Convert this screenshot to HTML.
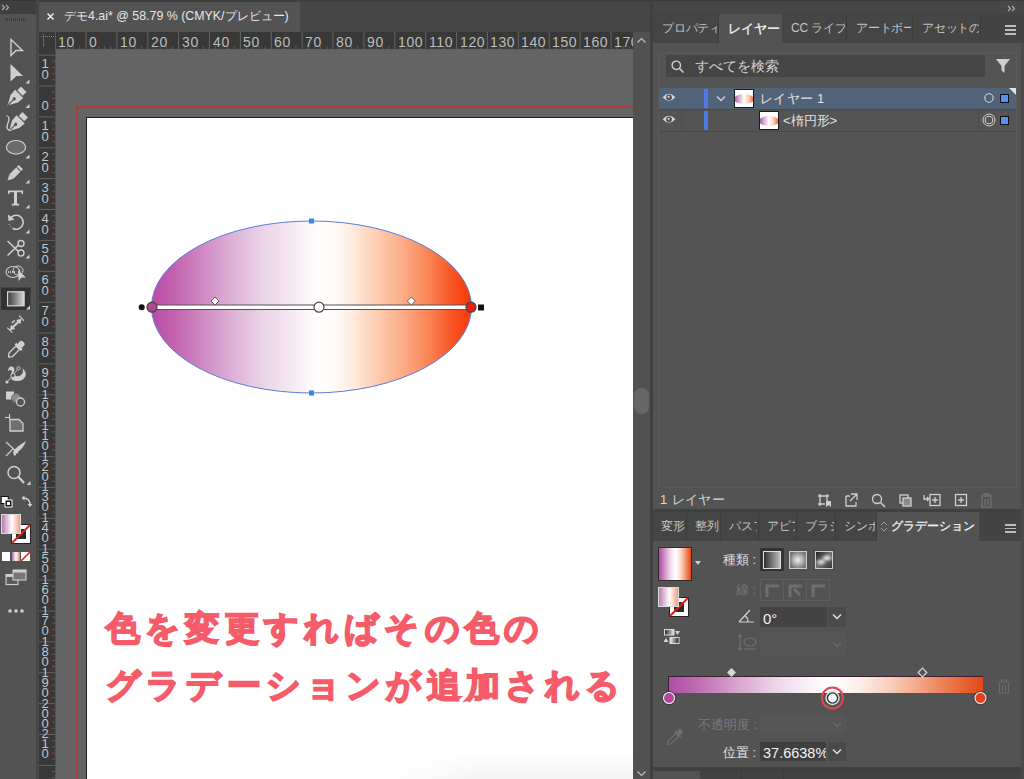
<!DOCTYPE html>
<html><head><meta charset="utf-8"><style>
html,body{margin:0;padding:0;width:1024px;height:779px;overflow:hidden;background:#535353;}
body{position:relative;font-family:"Liberation Sans",sans-serif;}
div{position:absolute;box-sizing:border-box;}
.t{white-space:nowrap;line-height:1;}
svg{position:absolute;overflow:visible;}
</style></head><body>

<div style="left:0px;top:0px;width:36px;height:779px;background:#535353;"></div>
<div style="left:0px;top:0px;width:36px;height:14px;background:#3f3f3f;"></div>
<div style="left:0px;top:0px;width:36px;height:1px;background:#363636;"></div>
<svg style="left:1px;top:4px" width="10" height="7"><path d="M1 1 L3.5 3.5 L1 6 M5 1 L7.5 3.5 L5 6" fill="none" stroke="#b0b0b0" stroke-width="1.1"/></svg>
<div style="left:5px;top:18px;width:22px;height:3px;background:repeating-linear-gradient(90deg,#3a3a3a 0 1px,transparent 1px 2px);"></div>
<div style="left:36px;top:0px;width:3px;height:779px;background:#474747;"></div>
<div style="left:39px;top:0px;width:611px;height:32px;background:#464646;"></div>
<div style="left:39px;top:0px;width:611px;height:2px;background:#3f3f3f;"></div>
<div style="left:39px;top:2px;width:261px;height:30px;background:#535353;"></div>
<svg style="left:46px;top:12px" width="9" height="9"><path d="M1.5 1.5 L7.5 7.5 M7.5 1.5 L1.5 7.5" stroke="#ececec" stroke-width="1.5"/></svg>
<div class="t" style="left:64px;top:10px;font-size:12.4px;color:#e6e6e6;letter-spacing:0px;">デモ4.ai* @ 58.79 % (CMYK/プレビュー)</div>
<div style="left:39px;top:32px;width:594px;height:17px;background:#383838;"></div>
<div style="left:39px;top:49px;width:16px;height:730px;background:#383838;"></div>
<div style="left:41px;top:36px;width:13px;height:1px;background:repeating-linear-gradient(90deg,#8a8a8a 0 1px,transparent 1px 2px);"></div>
<div style="left:43px;top:34px;width:1px;height:13px;background:#6a6a6a;"></div>
<div style="left:55px;top:32px;width:1px;height:17px;background:#555;"></div>
<svg style="left:0;top:0" width="1024" height="779"><rect x="54.6" y="32" width="1" height="17" fill="#646464"/><rect x="60.8" y="46" width="1" height="3" fill="#5a5a5a"/><rect x="67.0" y="46" width="1" height="3" fill="#5a5a5a"/><rect x="73.1" y="46" width="1" height="3" fill="#5a5a5a"/><rect x="79.3" y="46" width="1" height="3" fill="#5a5a5a"/><rect x="85.5" y="32" width="1" height="17" fill="#646464"/><rect x="91.7" y="46" width="1" height="3" fill="#5a5a5a"/><rect x="97.9" y="46" width="1" height="3" fill="#5a5a5a"/><rect x="104.0" y="46" width="1" height="3" fill="#5a5a5a"/><rect x="110.2" y="46" width="1" height="3" fill="#5a5a5a"/><rect x="116.4" y="32" width="1" height="17" fill="#646464"/><rect x="122.6" y="46" width="1" height="3" fill="#5a5a5a"/><rect x="128.7" y="46" width="1" height="3" fill="#5a5a5a"/><rect x="134.9" y="46" width="1" height="3" fill="#5a5a5a"/><rect x="141.1" y="46" width="1" height="3" fill="#5a5a5a"/><rect x="147.3" y="32" width="1" height="17" fill="#646464"/><rect x="153.4" y="46" width="1" height="3" fill="#5a5a5a"/><rect x="159.6" y="46" width="1" height="3" fill="#5a5a5a"/><rect x="165.8" y="46" width="1" height="3" fill="#5a5a5a"/><rect x="172.0" y="46" width="1" height="3" fill="#5a5a5a"/><rect x="178.1" y="32" width="1" height="17" fill="#646464"/><rect x="184.3" y="46" width="1" height="3" fill="#5a5a5a"/><rect x="190.5" y="46" width="1" height="3" fill="#5a5a5a"/><rect x="196.7" y="46" width="1" height="3" fill="#5a5a5a"/><rect x="202.8" y="46" width="1" height="3" fill="#5a5a5a"/><rect x="209.0" y="32" width="1" height="17" fill="#646464"/><rect x="215.2" y="46" width="1" height="3" fill="#5a5a5a"/><rect x="221.4" y="46" width="1" height="3" fill="#5a5a5a"/><rect x="227.5" y="46" width="1" height="3" fill="#5a5a5a"/><rect x="233.7" y="46" width="1" height="3" fill="#5a5a5a"/><rect x="239.9" y="32" width="1" height="17" fill="#646464"/><rect x="246.1" y="46" width="1" height="3" fill="#5a5a5a"/><rect x="252.3" y="46" width="1" height="3" fill="#5a5a5a"/><rect x="258.4" y="46" width="1" height="3" fill="#5a5a5a"/><rect x="264.6" y="46" width="1" height="3" fill="#5a5a5a"/><rect x="270.8" y="32" width="1" height="17" fill="#646464"/><rect x="277.0" y="46" width="1" height="3" fill="#5a5a5a"/><rect x="283.1" y="46" width="1" height="3" fill="#5a5a5a"/><rect x="289.3" y="46" width="1" height="3" fill="#5a5a5a"/><rect x="295.5" y="46" width="1" height="3" fill="#5a5a5a"/><rect x="301.7" y="32" width="1" height="17" fill="#646464"/><rect x="307.8" y="46" width="1" height="3" fill="#5a5a5a"/><rect x="314.0" y="46" width="1" height="3" fill="#5a5a5a"/><rect x="320.2" y="46" width="1" height="3" fill="#5a5a5a"/><rect x="326.4" y="46" width="1" height="3" fill="#5a5a5a"/><rect x="332.5" y="32" width="1" height="17" fill="#646464"/><rect x="338.7" y="46" width="1" height="3" fill="#5a5a5a"/><rect x="344.9" y="46" width="1" height="3" fill="#5a5a5a"/><rect x="351.1" y="46" width="1" height="3" fill="#5a5a5a"/><rect x="357.2" y="46" width="1" height="3" fill="#5a5a5a"/><rect x="363.4" y="32" width="1" height="17" fill="#646464"/><rect x="369.6" y="46" width="1" height="3" fill="#5a5a5a"/><rect x="375.8" y="46" width="1" height="3" fill="#5a5a5a"/><rect x="381.9" y="46" width="1" height="3" fill="#5a5a5a"/><rect x="388.1" y="46" width="1" height="3" fill="#5a5a5a"/><rect x="394.3" y="32" width="1" height="17" fill="#646464"/><rect x="400.5" y="46" width="1" height="3" fill="#5a5a5a"/><rect x="406.7" y="46" width="1" height="3" fill="#5a5a5a"/><rect x="412.8" y="46" width="1" height="3" fill="#5a5a5a"/><rect x="419.0" y="46" width="1" height="3" fill="#5a5a5a"/><rect x="425.2" y="32" width="1" height="17" fill="#646464"/><rect x="431.4" y="46" width="1" height="3" fill="#5a5a5a"/><rect x="437.5" y="46" width="1" height="3" fill="#5a5a5a"/><rect x="443.7" y="46" width="1" height="3" fill="#5a5a5a"/><rect x="449.9" y="46" width="1" height="3" fill="#5a5a5a"/><rect x="456.1" y="32" width="1" height="17" fill="#646464"/><rect x="462.2" y="46" width="1" height="3" fill="#5a5a5a"/><rect x="468.4" y="46" width="1" height="3" fill="#5a5a5a"/><rect x="474.6" y="46" width="1" height="3" fill="#5a5a5a"/><rect x="480.8" y="46" width="1" height="3" fill="#5a5a5a"/><rect x="486.9" y="32" width="1" height="17" fill="#646464"/><rect x="493.1" y="46" width="1" height="3" fill="#5a5a5a"/><rect x="499.3" y="46" width="1" height="3" fill="#5a5a5a"/><rect x="505.5" y="46" width="1" height="3" fill="#5a5a5a"/><rect x="511.6" y="46" width="1" height="3" fill="#5a5a5a"/><rect x="517.8" y="32" width="1" height="17" fill="#646464"/><rect x="524.0" y="46" width="1" height="3" fill="#5a5a5a"/><rect x="530.2" y="46" width="1" height="3" fill="#5a5a5a"/><rect x="536.3" y="46" width="1" height="3" fill="#5a5a5a"/><rect x="542.5" y="46" width="1" height="3" fill="#5a5a5a"/><rect x="548.7" y="32" width="1" height="17" fill="#646464"/><rect x="554.9" y="46" width="1" height="3" fill="#5a5a5a"/><rect x="561.1" y="46" width="1" height="3" fill="#5a5a5a"/><rect x="567.2" y="46" width="1" height="3" fill="#5a5a5a"/><rect x="573.4" y="46" width="1" height="3" fill="#5a5a5a"/><rect x="579.6" y="32" width="1" height="17" fill="#646464"/><rect x="585.8" y="46" width="1" height="3" fill="#5a5a5a"/><rect x="591.9" y="46" width="1" height="3" fill="#5a5a5a"/><rect x="598.1" y="46" width="1" height="3" fill="#5a5a5a"/><rect x="604.3" y="46" width="1" height="3" fill="#5a5a5a"/><rect x="610.5" y="32" width="1" height="17" fill="#646464"/><rect x="616.6" y="46" width="1" height="3" fill="#5a5a5a"/><rect x="622.8" y="46" width="1" height="3" fill="#5a5a5a"/><rect x="629.0" y="46" width="1" height="3" fill="#5a5a5a"/></svg>
<div class="t" style="left:58px;top:35px;font-size:14px;color:#bcbcbc;letter-spacing:0.6px;">10</div>
<div class="t" style="left:89px;top:35px;font-size:14px;color:#bcbcbc;letter-spacing:0.6px;">0</div>
<div class="t" style="left:120px;top:35px;font-size:14px;color:#bcbcbc;letter-spacing:0.6px;">10</div>
<div class="t" style="left:151px;top:35px;font-size:14px;color:#bcbcbc;letter-spacing:0.6px;">20</div>
<div class="t" style="left:182px;top:35px;font-size:14px;color:#bcbcbc;letter-spacing:0.6px;">30</div>
<div class="t" style="left:213px;top:35px;font-size:14px;color:#bcbcbc;letter-spacing:0.6px;">40</div>
<div class="t" style="left:243px;top:35px;font-size:14px;color:#bcbcbc;letter-spacing:0.6px;">50</div>
<div class="t" style="left:274px;top:35px;font-size:14px;color:#bcbcbc;letter-spacing:0.6px;">60</div>
<div class="t" style="left:305px;top:35px;font-size:14px;color:#bcbcbc;letter-spacing:0.6px;">70</div>
<div class="t" style="left:336px;top:35px;font-size:14px;color:#bcbcbc;letter-spacing:0.6px;">80</div>
<div class="t" style="left:367px;top:35px;font-size:14px;color:#bcbcbc;letter-spacing:0.6px;">90</div>
<div class="t" style="left:398px;top:35px;font-size:14px;color:#bcbcbc;letter-spacing:0.6px;">100</div>
<div class="t" style="left:429px;top:35px;font-size:14px;color:#bcbcbc;letter-spacing:0.6px;">110</div>
<div class="t" style="left:460px;top:35px;font-size:14px;color:#bcbcbc;letter-spacing:0.6px;">120</div>
<div class="t" style="left:490px;top:35px;font-size:14px;color:#bcbcbc;letter-spacing:0.6px;">130</div>
<div class="t" style="left:521px;top:35px;font-size:14px;color:#bcbcbc;letter-spacing:0.6px;">140</div>
<div class="t" style="left:552px;top:35px;font-size:14px;color:#bcbcbc;letter-spacing:0.6px;">150</div>
<div class="t" style="left:583px;top:35px;font-size:14px;color:#bcbcbc;letter-spacing:0.6px;">160</div>
<div class="t" style="left:614px;top:35px;font-size:14px;color:#bcbcbc;letter-spacing:0.6px;">170</div>
<svg style="left:0;top:0" width="1024" height="779"><rect x="39" y="54.6" width="16" height="1" fill="#646464"/><rect x="52" y="60.8" width="3" height="1" fill="#5a5a5a"/><rect x="52" y="67.0" width="3" height="1" fill="#5a5a5a"/><rect x="52" y="73.1" width="3" height="1" fill="#5a5a5a"/><rect x="52" y="79.3" width="3" height="1" fill="#5a5a5a"/><rect x="39" y="85.5" width="16" height="1" fill="#646464"/><rect x="52" y="91.7" width="3" height="1" fill="#5a5a5a"/><rect x="52" y="97.9" width="3" height="1" fill="#5a5a5a"/><rect x="52" y="104.0" width="3" height="1" fill="#5a5a5a"/><rect x="52" y="110.2" width="3" height="1" fill="#5a5a5a"/><rect x="39" y="116.4" width="16" height="1" fill="#646464"/><rect x="52" y="122.6" width="3" height="1" fill="#5a5a5a"/><rect x="52" y="128.7" width="3" height="1" fill="#5a5a5a"/><rect x="52" y="134.9" width="3" height="1" fill="#5a5a5a"/><rect x="52" y="141.1" width="3" height="1" fill="#5a5a5a"/><rect x="39" y="147.3" width="16" height="1" fill="#646464"/><rect x="52" y="153.4" width="3" height="1" fill="#5a5a5a"/><rect x="52" y="159.6" width="3" height="1" fill="#5a5a5a"/><rect x="52" y="165.8" width="3" height="1" fill="#5a5a5a"/><rect x="52" y="172.0" width="3" height="1" fill="#5a5a5a"/><rect x="39" y="178.1" width="16" height="1" fill="#646464"/><rect x="52" y="184.3" width="3" height="1" fill="#5a5a5a"/><rect x="52" y="190.5" width="3" height="1" fill="#5a5a5a"/><rect x="52" y="196.7" width="3" height="1" fill="#5a5a5a"/><rect x="52" y="202.8" width="3" height="1" fill="#5a5a5a"/><rect x="39" y="209.0" width="16" height="1" fill="#646464"/><rect x="52" y="215.2" width="3" height="1" fill="#5a5a5a"/><rect x="52" y="221.4" width="3" height="1" fill="#5a5a5a"/><rect x="52" y="227.5" width="3" height="1" fill="#5a5a5a"/><rect x="52" y="233.7" width="3" height="1" fill="#5a5a5a"/><rect x="39" y="239.9" width="16" height="1" fill="#646464"/><rect x="52" y="246.1" width="3" height="1" fill="#5a5a5a"/><rect x="52" y="252.3" width="3" height="1" fill="#5a5a5a"/><rect x="52" y="258.4" width="3" height="1" fill="#5a5a5a"/><rect x="52" y="264.6" width="3" height="1" fill="#5a5a5a"/><rect x="39" y="270.8" width="16" height="1" fill="#646464"/><rect x="52" y="277.0" width="3" height="1" fill="#5a5a5a"/><rect x="52" y="283.1" width="3" height="1" fill="#5a5a5a"/><rect x="52" y="289.3" width="3" height="1" fill="#5a5a5a"/><rect x="52" y="295.5" width="3" height="1" fill="#5a5a5a"/><rect x="39" y="301.7" width="16" height="1" fill="#646464"/><rect x="52" y="307.8" width="3" height="1" fill="#5a5a5a"/><rect x="52" y="314.0" width="3" height="1" fill="#5a5a5a"/><rect x="52" y="320.2" width="3" height="1" fill="#5a5a5a"/><rect x="52" y="326.4" width="3" height="1" fill="#5a5a5a"/><rect x="39" y="332.5" width="16" height="1" fill="#646464"/><rect x="52" y="338.7" width="3" height="1" fill="#5a5a5a"/><rect x="52" y="344.9" width="3" height="1" fill="#5a5a5a"/><rect x="52" y="351.1" width="3" height="1" fill="#5a5a5a"/><rect x="52" y="357.2" width="3" height="1" fill="#5a5a5a"/><rect x="39" y="363.4" width="16" height="1" fill="#646464"/><rect x="52" y="369.6" width="3" height="1" fill="#5a5a5a"/><rect x="52" y="375.8" width="3" height="1" fill="#5a5a5a"/><rect x="52" y="381.9" width="3" height="1" fill="#5a5a5a"/><rect x="52" y="388.1" width="3" height="1" fill="#5a5a5a"/><rect x="39" y="394.3" width="16" height="1" fill="#646464"/><rect x="52" y="400.5" width="3" height="1" fill="#5a5a5a"/><rect x="52" y="406.7" width="3" height="1" fill="#5a5a5a"/><rect x="52" y="412.8" width="3" height="1" fill="#5a5a5a"/><rect x="52" y="419.0" width="3" height="1" fill="#5a5a5a"/><rect x="39" y="425.2" width="16" height="1" fill="#646464"/><rect x="52" y="431.4" width="3" height="1" fill="#5a5a5a"/><rect x="52" y="437.5" width="3" height="1" fill="#5a5a5a"/><rect x="52" y="443.7" width="3" height="1" fill="#5a5a5a"/><rect x="52" y="449.9" width="3" height="1" fill="#5a5a5a"/><rect x="39" y="456.1" width="16" height="1" fill="#646464"/><rect x="52" y="462.2" width="3" height="1" fill="#5a5a5a"/><rect x="52" y="468.4" width="3" height="1" fill="#5a5a5a"/><rect x="52" y="474.6" width="3" height="1" fill="#5a5a5a"/><rect x="52" y="480.8" width="3" height="1" fill="#5a5a5a"/><rect x="39" y="486.9" width="16" height="1" fill="#646464"/><rect x="52" y="493.1" width="3" height="1" fill="#5a5a5a"/><rect x="52" y="499.3" width="3" height="1" fill="#5a5a5a"/><rect x="52" y="505.5" width="3" height="1" fill="#5a5a5a"/><rect x="52" y="511.6" width="3" height="1" fill="#5a5a5a"/><rect x="39" y="517.8" width="16" height="1" fill="#646464"/><rect x="52" y="524.0" width="3" height="1" fill="#5a5a5a"/><rect x="52" y="530.2" width="3" height="1" fill="#5a5a5a"/><rect x="52" y="536.3" width="3" height="1" fill="#5a5a5a"/><rect x="52" y="542.5" width="3" height="1" fill="#5a5a5a"/><rect x="39" y="548.7" width="16" height="1" fill="#646464"/><rect x="52" y="554.9" width="3" height="1" fill="#5a5a5a"/><rect x="52" y="561.1" width="3" height="1" fill="#5a5a5a"/><rect x="52" y="567.2" width="3" height="1" fill="#5a5a5a"/><rect x="52" y="573.4" width="3" height="1" fill="#5a5a5a"/><rect x="39" y="579.6" width="16" height="1" fill="#646464"/><rect x="52" y="585.8" width="3" height="1" fill="#5a5a5a"/><rect x="52" y="591.9" width="3" height="1" fill="#5a5a5a"/><rect x="52" y="598.1" width="3" height="1" fill="#5a5a5a"/><rect x="52" y="604.3" width="3" height="1" fill="#5a5a5a"/><rect x="39" y="610.5" width="16" height="1" fill="#646464"/><rect x="52" y="616.6" width="3" height="1" fill="#5a5a5a"/><rect x="52" y="622.8" width="3" height="1" fill="#5a5a5a"/><rect x="52" y="629.0" width="3" height="1" fill="#5a5a5a"/><rect x="52" y="635.2" width="3" height="1" fill="#5a5a5a"/><rect x="39" y="641.3" width="16" height="1" fill="#646464"/><rect x="52" y="647.5" width="3" height="1" fill="#5a5a5a"/><rect x="52" y="653.7" width="3" height="1" fill="#5a5a5a"/><rect x="52" y="659.9" width="3" height="1" fill="#5a5a5a"/><rect x="52" y="666.0" width="3" height="1" fill="#5a5a5a"/><rect x="39" y="672.2" width="16" height="1" fill="#646464"/><rect x="52" y="678.4" width="3" height="1" fill="#5a5a5a"/><rect x="52" y="684.6" width="3" height="1" fill="#5a5a5a"/><rect x="52" y="690.7" width="3" height="1" fill="#5a5a5a"/><rect x="52" y="696.9" width="3" height="1" fill="#5a5a5a"/><rect x="39" y="703.1" width="16" height="1" fill="#646464"/><rect x="52" y="709.3" width="3" height="1" fill="#5a5a5a"/><rect x="52" y="715.5" width="3" height="1" fill="#5a5a5a"/><rect x="52" y="721.6" width="3" height="1" fill="#5a5a5a"/><rect x="52" y="727.8" width="3" height="1" fill="#5a5a5a"/><rect x="39" y="734.0" width="16" height="1" fill="#646464"/><rect x="52" y="740.2" width="3" height="1" fill="#5a5a5a"/><rect x="52" y="746.3" width="3" height="1" fill="#5a5a5a"/><rect x="52" y="752.5" width="3" height="1" fill="#5a5a5a"/><rect x="52" y="758.7" width="3" height="1" fill="#5a5a5a"/><rect x="39" y="764.9" width="16" height="1" fill="#646464"/><rect x="52" y="771.0" width="3" height="1" fill="#5a5a5a"/><rect x="52" y="777.2" width="3" height="1" fill="#5a5a5a"/><rect x="52" y="783.4" width="3" height="1" fill="#5a5a5a"/><rect x="52" y="789.6" width="3" height="1" fill="#5a5a5a"/></svg>
<div class="t" style="left:39px;top:58px;width:12px;text-align:center;font-size:13px;line-height:11px;color:#c4c4c4;">1<br>0</div>
<div class="t" style="left:39px;top:100px;width:12px;text-align:center;font-size:13px;line-height:11px;color:#c4c4c4;">0</div>
<div class="t" style="left:39px;top:120px;width:12px;text-align:center;font-size:13px;line-height:11px;color:#c4c4c4;">1<br>0</div>
<div class="t" style="left:39px;top:151px;width:12px;text-align:center;font-size:13px;line-height:11px;color:#c4c4c4;">2<br>0</div>
<div class="t" style="left:39px;top:182px;width:12px;text-align:center;font-size:13px;line-height:11px;color:#c4c4c4;">3<br>0</div>
<div class="t" style="left:39px;top:213px;width:12px;text-align:center;font-size:13px;line-height:11px;color:#c4c4c4;">4<br>0</div>
<div class="t" style="left:39px;top:243px;width:12px;text-align:center;font-size:13px;line-height:11px;color:#c4c4c4;">5<br>0</div>
<div class="t" style="left:39px;top:274px;width:12px;text-align:center;font-size:13px;line-height:11px;color:#c4c4c4;">6<br>0</div>
<div class="t" style="left:39px;top:305px;width:12px;text-align:center;font-size:13px;line-height:11px;color:#c4c4c4;">7<br>0</div>
<div class="t" style="left:39px;top:336px;width:12px;text-align:center;font-size:13px;line-height:11px;color:#c4c4c4;">8<br>0</div>
<div class="t" style="left:39px;top:367px;width:12px;text-align:center;font-size:13px;line-height:11px;color:#c4c4c4;">9<br>0</div>
<div class="t" style="left:39px;top:390px;width:12px;text-align:center;font-size:13px;line-height:10.2px;color:#c4c4c4;">1<br>0<br>0</div>
<div class="t" style="left:39px;top:421px;width:12px;text-align:center;font-size:13px;line-height:10.2px;color:#c4c4c4;">1<br>1<br>0</div>
<div class="t" style="left:39px;top:452px;width:12px;text-align:center;font-size:13px;line-height:10.2px;color:#c4c4c4;">1<br>2<br>0</div>
<div class="t" style="left:39px;top:482px;width:12px;text-align:center;font-size:13px;line-height:10.2px;color:#c4c4c4;">1<br>3<br>0</div>
<div class="t" style="left:39px;top:513px;width:12px;text-align:center;font-size:13px;line-height:10.2px;color:#c4c4c4;">1<br>4<br>0</div>
<div class="t" style="left:39px;top:544px;width:12px;text-align:center;font-size:13px;line-height:10.2px;color:#c4c4c4;">1<br>5<br>0</div>
<div class="t" style="left:39px;top:575px;width:12px;text-align:center;font-size:13px;line-height:10.2px;color:#c4c4c4;">1<br>6<br>0</div>
<div class="t" style="left:39px;top:606px;width:12px;text-align:center;font-size:13px;line-height:10.2px;color:#c4c4c4;">1<br>7<br>0</div>
<div class="t" style="left:39px;top:637px;width:12px;text-align:center;font-size:13px;line-height:10.2px;color:#c4c4c4;">1<br>8<br>0</div>
<div class="t" style="left:39px;top:668px;width:12px;text-align:center;font-size:13px;line-height:10.2px;color:#c4c4c4;">1<br>9<br>0</div>
<div class="t" style="left:39px;top:699px;width:12px;text-align:center;font-size:13px;line-height:10.2px;color:#c4c4c4;">2<br>0<br>0</div>
<div class="t" style="left:39px;top:729px;width:12px;text-align:center;font-size:13px;line-height:10.2px;color:#c4c4c4;">2<br>1<br>0</div>
<div style="left:39px;top:32px;width:16px;height:17px;background:#383838;"></div>
<div style="left:41px;top:36px;width:13px;height:1px;background:repeating-linear-gradient(90deg,#8a8a8a 0 1px,transparent 1px 2px);"></div>
<div style="left:43px;top:34px;width:1px;height:13px;background:#6a6a6a;"></div>
<div style="left:56px;top:49px;width:577px;height:730px;background:#646464;"></div>
<div style="left:76px;top:106px;width:557px;height:2px;background:#ad3a3c;"></div>
<div style="left:76px;top:106px;width:2px;height:673px;background:#ad3a3c;"></div>
<div style="left:86px;top:117px;width:547px;height:662px;background:#222;"></div>
<div style="left:87px;top:118px;width:546px;height:661px;background:#ffffff;"></div>
<div style="left:633px;top:32px;width:17px;height:747px;background:#515151;"></div>
<div style="left:634px;top:388px;width:15px;height:26px;background:#666;border-radius:7px;"></div>
<div style="left:650px;top:0px;width:3px;height:779px;background:#404040;"></div>
<div style="left:653px;top:0px;width:371px;height:779px;background:#535353;"></div>
<div style="left:653px;top:0px;width:371px;height:13px;background:#474747;"></div>
<div style="left:653px;top:0px;width:371px;height:1px;background:#3a3a3a;"></div>
<svg style="left:1007px;top:5px" width="10" height="7"><path d="M1 1 L3.5 3.5 L1 6 M5 1 L7.5 3.5 L5 6" fill="none" stroke="#b0b0b0" stroke-width="1.1"/></svg>
<div style="left:653px;top:13px;width:371px;height:30px;background:#434343;"></div>
<div style="left:653px;top:14px;width:66px;height:29px;background:#454545;border-right:1px solid #3c3c3c;"></div>
<div class="t" style="left:653px;top:22px;width:64px;font-size:12px;letter-spacing:-0.2px;color:#c4c4c4;overflow:hidden;padding-left:9px;">プロパティ</div>
<div style="left:719px;top:14px;width:63px;height:29px;background:#535353;"></div>
<div class="t" style="left:719px;top:22px;width:63px;font-size:13px;color:#f2f2f2;overflow:hidden;padding-left:9px;-webkit-text-stroke:0.3px #f2f2f2;">レイヤー</div>
<div style="left:782px;top:14px;width:65px;height:29px;background:#454545;border-right:1px solid #3c3c3c;"></div>
<div class="t" style="left:782px;top:22px;width:63px;font-size:12px;letter-spacing:-0.2px;color:#c4c4c4;overflow:hidden;padding-left:9px;">CC ライブ</div>
<div style="left:847px;top:14px;width:66px;height:29px;background:#454545;border-right:1px solid #3c3c3c;"></div>
<div class="t" style="left:847px;top:22px;width:64px;font-size:12px;letter-spacing:-0.2px;color:#c4c4c4;overflow:hidden;padding-left:9px;">アートボー</div>
<div style="left:913px;top:14px;width:68px;height:29px;background:#454545;border-right:1px solid #3c3c3c;"></div>
<div class="t" style="left:913px;top:22px;width:66px;font-size:12px;letter-spacing:-0.2px;color:#c4c4c4;overflow:hidden;padding-left:9px;">アセットの</div>
<div style="left:1005px;top:25px;width:11px;height:1.5px;background:#bdbdbd;"></div>
<div style="left:1005px;top:29px;width:11px;height:1.5px;background:#bdbdbd;"></div>
<div style="left:1005px;top:33px;width:11px;height:1.5px;background:#bdbdbd;"></div>
<div style="left:658px;top:52px;width:359px;height:436px;background:#545454;border:1px solid #5a5a5a;"></div>
<div style="left:666px;top:55px;width:319px;height:22px;background:#454545;"></div>
<svg style="left:670px;top:59px" width="16" height="16"><circle cx="6.3" cy="6.3" r="4.2" fill="none" stroke="#d0d0d0" stroke-width="1.4"/><line x1="9.5" y1="9.5" x2="13" y2="13" stroke="#d0d0d0" stroke-width="1.7" stroke-linecap="round"/></svg>
<div class="t" style="left:695px;top:59px;font-size:14px;color:#d2d2d2;">すべてを検索</div>
<svg style="left:995px;top:58px" width="16" height="16"><path d="M1 1 H15 L9.5 8 V15 L6.5 12.5 V8 Z" fill="#cfcfcf"/></svg>
<div style="left:659px;top:88px;width:357px;height:21px;background:#506379;"></div>
<svg style="left:662px;top:92px" width="14" height="11"><path d="M0.6 5.3 Q7 -1.6 13.4 5.3 Q7 12.2 0.6 5.3Z" fill="#d6d6d6"/><circle cx="7" cy="5.3" r="2.9" fill="#505050"/><circle cx="6.6" cy="4.8" r="1.1" fill="#d6d6d6"/></svg>
<div style="left:704px;top:89px;width:4px;height:19px;background:#5078e6;"></div>
<svg style="left:716px;top:95px" width="10" height="8"><path d="M1 1.5 L5 5.5 L9 1.5" fill="none" stroke="#d0d0d0" stroke-width="1.5"/></svg>
<div style="left:734px;top:89px;width:20px;height:19px;background:#fff;border:1px solid #1a1a1a;overflow:hidden;"><div style="left:-1px;top:4px;width:20px;height:10px;border-radius:50%;background:linear-gradient(90deg,#a04a98,#d8b0d4 25%,#fff 50%,#f8c8b0 75%,#e85a28);"></div></div>
<div class="t" style="left:760px;top:92px;font-size:13px;color:#e0e0e0;letter-spacing:0.3px;">レイヤー 1</div>
<svg style="left:984px;top:93px" width="10" height="10"><circle cx="5" cy="5" r="4.2" fill="none" stroke="#d8d8d8" stroke-width="1.1"/></svg>
<div style="left:1000px;top:94px;width:9px;height:9px;background:#5d8ef2;border:1px solid #111;"></div>
<svg style="left:1009px;top:88px" width="7" height="7"><path d="M0 0 H7 V7 Z" fill="#e0e0e0"/></svg>
<div style="left:659px;top:109px;width:357px;height:1px;background:#4a4a4a;"></div>
<div style="left:659px;top:131px;width:357px;height:1px;background:#4a4a4a;"></div>
<svg style="left:662px;top:114px" width="14" height="11"><path d="M0.6 5.3 Q7 -1.6 13.4 5.3 Q7 12.2 0.6 5.3Z" fill="#d6d6d6"/><circle cx="7" cy="5.3" r="2.9" fill="#505050"/><circle cx="6.6" cy="4.8" r="1.1" fill="#d6d6d6"/></svg>
<div style="left:681px;top:110px;width:1px;height:21px;background:#4c4c4c;"></div>
<div style="left:704px;top:111px;width:4px;height:19px;background:#5078e6;"></div>
<div style="left:759px;top:111px;width:20px;height:19px;background:#fff;border:1px solid #1a1a1a;overflow:hidden;"><div style="left:-1px;top:4px;width:20px;height:10px;border-radius:50%;background:linear-gradient(90deg,#a04a98,#d8b0d4 25%,#fff 50%,#f8c8b0 75%,#e85a28);"></div></div>
<div class="t" style="left:783px;top:114px;font-size:13px;color:#e0e0e0;">&lt;楕円形&gt;</div>
<div style="left:978px;top:110px;width:1px;height:21px;background:#4c4c4c;"></div>
<svg style="left:982px;top:113px" width="14" height="14"><circle cx="7" cy="7" r="6" fill="none" stroke="#d0d0d0" stroke-width="1"/><circle cx="7" cy="7" r="3.8" fill="none" stroke="#d0d0d0" stroke-width="1.1"/></svg>
<div style="left:1000px;top:116px;width:9px;height:9px;background:#5d8ef2;border:1px solid #111;"></div>
<div class="t" style="left:660px;top:493px;font-size:13px;color:#d6d6d6;letter-spacing:0.4px;">1 レイヤー</div>
<svg style="left:816px;top:493px" width="180" height="15" fill="none" stroke="#d0d0d0" stroke-width="1.3"><path d="M2 3 H13 M4 1 V13 M2 11 H9 M11 1 V8"/><path d="M10 8 H15 V14 L12.5 12 L10 14 Z" fill="#d0d0d0" stroke="none"/><path d="M30 3 H34 M30 3 V13 H40 V9 M35 1 H41 V7 M41 1 L34 8"/><circle cx="61" cy="6" r="4.5"/><path d="M64.5 9.5 L69 14" stroke-width="1.6"/><rect x="84" y="2" width="8" height="8"/><rect x="87" y="5" width="8" height="8" fill="#8a8a8a"/><path d="M108 2 V6 H113 M111 4 L113 6 L111 8"/><rect x="114" y="1.5" width="10" height="11"/><path d="M119 4 V10 M116 7 H122"/><rect x="139.5" y="1.5" width="11" height="11"/><path d="M145 4 V10 M142 7 H148"/><path d="M165 3 H176 M168 3 V1 H173 V3 M166 4 V14 H175 V4 M169 6 V12 M172 6 V12" stroke="#707070"/></svg>
<div style="left:653px;top:509px;width:371px;height:3px;background:#404040;"></div>
<div style="left:653px;top:512px;width:371px;height:29px;background:#434343;"></div>
<div style="left:653px;top:512px;width:34px;height:29px;background:#454545;border-right:1px solid #3c3c3c;"></div>
<div class="t" style="left:653px;top:520px;width:32px;font-size:12px;color:#c4c4c4;overflow:hidden;padding-left:8px;">変形</div>
<div style="left:687px;top:512px;width:34px;height:29px;background:#454545;border-right:1px solid #3c3c3c;"></div>
<div class="t" style="left:687px;top:520px;width:32px;font-size:12px;color:#c4c4c4;overflow:hidden;padding-left:8px;">整列</div>
<div style="left:721px;top:512px;width:38px;height:29px;background:#454545;border-right:1px solid #3c3c3c;"></div>
<div class="t" style="left:721px;top:520px;width:36px;font-size:12px;color:#c4c4c4;overflow:hidden;padding-left:8px;">パスフ</div>
<div style="left:759px;top:512px;width:38px;height:29px;background:#454545;border-right:1px solid #3c3c3c;"></div>
<div class="t" style="left:759px;top:520px;width:36px;font-size:12px;color:#c4c4c4;overflow:hidden;padding-left:8px;">アピア</div>
<div style="left:797px;top:512px;width:39px;height:29px;background:#454545;border-right:1px solid #3c3c3c;"></div>
<div class="t" style="left:797px;top:520px;width:37px;font-size:12px;color:#c4c4c4;overflow:hidden;padding-left:8px;">ブラシ</div>
<div style="left:836px;top:512px;width:41px;height:29px;background:#454545;border-right:1px solid #3c3c3c;"></div>
<div class="t" style="left:836px;top:520px;width:39px;font-size:12px;color:#c4c4c4;overflow:hidden;padding-left:8px;">シンボル</div>
<div style="left:877px;top:512px;width:102px;height:29px;background:#535353;"></div>
<svg style="left:880px;top:520px" width="8" height="13"><path d="M1 5 L4 2 L7 5 M1 8 L4 11 L7 8" fill="none" stroke="#a0a0a0" stroke-width="1"/></svg>
<div class="t" style="left:891px;top:520px;font-size:12px;color:#f2f2f2;-webkit-text-stroke:0.3px #f2f2f2;">グラデーション</div>
<div style="left:1005px;top:524.0px;width:11px;height:1.5px;background:#bdbdbd;"></div>
<div style="left:1005px;top:527.6px;width:11px;height:1.5px;background:#bdbdbd;"></div>
<div style="left:1005px;top:531.2px;width:11px;height:1.5px;background:#bdbdbd;"></div>
<div style="left:653px;top:541px;width:371px;height:226px;background:#535353;"></div>
<div style="left:658px;top:547px;width:34px;height:34px;border:1px solid #2a2a2a;background:linear-gradient(90deg,#b04ea6 0%,#c070b4 10%,#d8a6d0 22%,#eed8ea 35%,#fbf5fa 46%,#ffffff 52%,#fdf0ea 60%,#f9d0bc 70%,#f3a484 80%,#ea7448 90%,#e24818 100%);"></div>
<svg style="left:695px;top:561px" width="6" height="5"><path d="M0 0 H6 L3 4 Z" fill="#cfcfcf"/></svg>
<div style="left:669px;top:597px;width:20px;height:20px;background:#fff;border:1px solid #222;"><div style="left:4px;top:4px;width:10px;height:10px;background:#2a2a2a;"></div></div>
<svg style="left:669px;top:597px" width="20" height="20"><line x1="1" y1="19" x2="19" y2="1" stroke="#e0201a" stroke-width="2"/></svg>
<div style="left:658px;top:587px;width:21px;height:20px;border:1px solid #dcdcdc;background:linear-gradient(90deg,#c07ab5,#fff 55%,#f0a080);"></div>
<svg style="left:660px;top:625px" width="24" height="22"><defs><linearGradient id="sw1" x1="0" x2="1"><stop offset="0" stop-color="#222"/><stop offset="1" stop-color="#eee"/></linearGradient><linearGradient id="sw2" x1="1" x2="0"><stop offset="0" stop-color="#222"/><stop offset="1" stop-color="#eee"/></linearGradient></defs><rect x="4.5" y="4.5" width="9.5" height="5.5" fill="url(#sw1)" stroke="#dcdcdc" stroke-width="1"/><path d="M15 6 H20 L17.5 10Z" fill="#d6d6d6"/><path d="M3.5 17 H8.5 L6 13Z" fill="#d6d6d6"/><rect x="10" y="12.5" width="9" height="6" fill="url(#sw2)" stroke="#dcdcdc" stroke-width="1"/></svg>
<div class="t" style="left:723px;top:553px;font-size:13px;color:#e0e0e0;">種類 :</div>
<div style="left:760px;top:548px;width:24px;height:23px;background:#333333;"></div>
<div style="left:763px;top:551px;width:18px;height:18px;border:1.5px solid #dedede;background:linear-gradient(90deg,#2e2e2e,#bdbdbd);"></div>
<div style="left:787px;top:548px;width:22px;height:23px;background:#4e4e4e;"></div>
<div style="left:789px;top:551px;width:18px;height:18px;border:1.5px solid #cfcfcf;background:radial-gradient(circle,#f0f0f0 0,#777 80%);"></div>
<div style="left:813px;top:548px;width:22px;height:23px;background:#4e4e4e;"></div>
<div style="left:815px;top:551px;width:18px;height:18px;border:1.5px solid #cfcfcf;background:radial-gradient(ellipse 6px 4px at 11px 6px,#eee,transparent),radial-gradient(ellipse 6px 4px at 5px 10px,#ddd,transparent),linear-gradient(135deg,#222,#777 50%,#333);"></div>
<div class="t" style="left:736px;top:583px;font-size:13px;color:#777;">線 :</div>
<div style="left:760px;top:579px;width:70px;height:22px;border:1px solid #5e5e5e;"></div>
<div style="left:783px;top:580px;width:1px;height:20px;background:#5e5e5e;"></div>
<div style="left:806px;top:580px;width:1px;height:20px;background:#5e5e5e;"></div>
<div style="left:829px;top:580px;width:1px;height:20px;background:#5e5e5e;"></div>
<svg style="left:764px;top:583px" width="66" height="15" fill="none" stroke="#6e6e6e" stroke-width="3"><path d="M3 14 V3 H15"/><path d="M26 14 V3 H38 M30 6 L36 12" /><path d="M49 14 V3 H61"/></svg>
<svg style="left:738px;top:609px" width="17" height="14"><path d="M1 13 H16 M1 13 L12 1 M7 6.5 Q10 9 10 13" fill="none" stroke="#cfcfcf" stroke-width="1.2"/></svg>
<div style="left:760px;top:607px;width:67px;height:20px;background:#434343;"></div>
<div class="t" style="left:763px;top:611px;font-size:15px;color:#f0f0f0;">0°</div>
<div style="left:828px;top:607px;width:18px;height:20px;background:#4a4a4a;"></div>
<svg style="left:831px;top:613px" width="12" height="8"><path d="M2 1.5 L6 5.5 L10 1.5" fill="none" stroke="#e0e0e0" stroke-width="1.5"/></svg>
<svg style="left:737px;top:634px" width="20" height="18" fill="none" stroke="#707070" stroke-width="1.2"><path d="M3 1 V16 M1 3 L3 1 L5 3 M1 14 L3 16 L5 14"/><ellipse cx="13" cy="8" rx="6" ry="4"/><path d="M7 15 H19"/></svg>
<div style="left:760px;top:633px;width:86px;height:22px;background:#565656;"></div>
<svg style="left:831px;top:641px" width="12" height="8"><path d="M2 1.5 L6 5.5 L10 1.5" fill="none" stroke="#6a6a6a" stroke-width="1.3"/></svg>
<div style="left:668px;top:676px;width:315px;height:17px;border-top:1px solid #3a2030;border-left:1px solid #3a2030;background:linear-gradient(90deg,#b04ea6 0%,#c070b4 10%,#d8a6d0 22%,#eed8ea 35%,#fbf5fa 46%,#ffffff 52%,#fdf0ea 60%,#f9d0bc 70%,#f3a484 80%,#ea7448 90%,#e24818 100%);"></div>
<svg style="left:726px;top:667px" width="11" height="11"><path d="M5.5 1 L10 5.5 L5.5 10 L1 5.5Z" fill="#d6d6d6"/></svg>
<svg style="left:917px;top:667px" width="11" height="11"><path d="M5.5 1.2 L9.8 5.5 L5.5 9.8 L1.2 5.5Z" fill="none" stroke="#d6d6d6" stroke-width="1.2"/></svg>
<svg style="left:655px;top:684px" width="340" height="30"><circle cx="14" cy="14" r="5.6" fill="#b4479c" stroke="#e8e8e8" stroke-width="1.4"/><circle cx="14" cy="14" r="6.6" fill="none" stroke="#2a2a2a" stroke-width="0.7"/><circle cx="177.5" cy="14" r="10.5" fill="none" stroke="#e04652" stroke-width="2.2"/><circle cx="177.5" cy="14" r="6.5" fill="#333" stroke="#e0e0e0" stroke-width="1.4"/><circle cx="177.5" cy="14" r="4.4" fill="#fff"/><circle cx="325.5" cy="14" r="5.6" fill="#e2401a" stroke="#e8e8e8" stroke-width="1.4"/><circle cx="325.5" cy="14" r="6.6" fill="none" stroke="#2a2a2a" stroke-width="0.7"/></svg>
<svg style="left:997px;top:679px" width="14" height="15" fill="none" stroke="#6c6c6c" stroke-width="1.2"><path d="M1 3 H13 M4.5 3 V1 H9.5 V3 M2.5 4 V14 H11.5 V4 M5.5 6 V12 M8.5 6 V12"/></svg>
<div class="t" style="left:698px;top:718px;font-size:13px;color:#7a7a7a;">不透明度 :</div>
<div style="left:760px;top:714px;width:86px;height:20px;background:#565656;"></div>
<svg style="left:831px;top:721px" width="12" height="8"><path d="M2 1.5 L6 5.5 L10 1.5" fill="none" stroke="#6a6a6a" stroke-width="1.3"/></svg>
<svg style="left:664px;top:728px" width="20" height="20"><g transform="rotate(45 10 10)"><rect x="7.5" y="-1" width="5" height="5" rx="1.5" fill="#6e6e6e"/><rect x="6" y="3.5" width="8" height="2" fill="#6e6e6e"/><path d="M8 5.5 H12 V16 L10 19 L8 16 Z" fill="none" stroke="#6e6e6e" stroke-width="1.2"/></g></svg>
<div class="t" style="left:723px;top:746px;font-size:13px;color:#e6e6e6;">位置 :</div>
<div style="left:760px;top:742px;width:66px;height:19px;background:#3f3f3f;"></div>
<div class="t" style="left:763px;top:746px;font-size:14.5px;color:#f2f2f2;width:63px;overflow:hidden;">37.6638%</div>
<div style="left:828px;top:742px;width:18px;height:19px;background:#4a4a4a;"></div>
<svg style="left:831px;top:748px" width="12" height="8"><path d="M2 1.5 L6 5.5 L10 1.5" fill="none" stroke="#e0e0e0" stroke-width="1.5"/></svg>
<div style="left:653px;top:767px;width:371px;height:4px;background:#404040;"></div>
<div style="left:653px;top:771px;width:371px;height:8px;background:#434343;"></div>
<div style="left:653px;top:771px;width:47px;height:8px;background:#535353;"></div>
<div style="left:741px;top:771px;width:1px;height:8px;background:#3a3a3a;"></div>
<div style="left:783px;top:771px;width:1px;height:8px;background:#3a3a3a;"></div>
<div style="left:1021px;top:42px;width:3px;height:737px;background:#4a4a4a;"></div>
<svg style="left:0;top:0" width="1024" height="779"><defs><linearGradient id="g1" x1="151.5" y1="0" x2="471.5" y2="0" gradientUnits="userSpaceOnUse"><stop offset="0" stop-color="#b94aa4"/><stop offset="0.08" stop-color="#c466b0"/><stop offset="0.17" stop-color="#d08ec4"/><stop offset="0.26" stop-color="#deb4d8"/><stop offset="0.35" stop-color="#ebd4e8"/><stop offset="0.43" stop-color="#f3e6f1"/><stop offset="0.48" stop-color="#faf4f9"/><stop offset="0.525" stop-color="#ffffff"/><stop offset="0.58" stop-color="#fffaf6"/><stop offset="0.64" stop-color="#fee6d8"/><stop offset="0.71" stop-color="#fdcaae"/><stop offset="0.79" stop-color="#fcaa84"/><stop offset="0.87" stop-color="#fa8252"/><stop offset="0.94" stop-color="#f85424"/><stop offset="1" stop-color="#f43806"/></linearGradient></defs><ellipse cx="311.5" cy="307" rx="160" ry="86" fill="url(#g1)" stroke="#5a7fd6" stroke-width="1"/><rect x="309" y="218.5" width="5" height="5" fill="#3a86ee"/><rect x="309" y="390.5" width="5" height="5" fill="#3a86ee"/><rect x="152" y="305" width="319" height="4.5" fill="#fff" stroke="#555" stroke-width="1"/><circle cx="141.7" cy="307.2" r="3" fill="#111"/><rect x="478" y="304.5" width="6" height="6" fill="#111"/><circle cx="152" cy="307.2" r="5" fill="#b0488f" stroke="#444" stroke-width="1.2"/><circle cx="319" cy="307.2" r="5" fill="#fff" stroke="#444" stroke-width="1.2"/><circle cx="471" cy="307.2" r="5" fill="#e2230e" stroke="#444" stroke-width="1.2"/><path d="M215 297 L219 301 L215 305 L211 301Z" fill="#fff" stroke="#555" stroke-width="0.9"/><path d="M411.3 297 L415.3 301 L411.3 305 L407.3 301Z" fill="#fff" stroke="#555" stroke-width="0.9"/></svg>
<div style="left:380px;top:755px;width:253px;height:24px;background:linear-gradient(180deg,rgba(0,0,0,0) 0%,rgba(0,0,0,0.045) 100%);-webkit-mask-image:linear-gradient(90deg,transparent,#000 40%);"></div>
<div class="t" style="left:106px;top:600px;font-size:34px;line-height:57.4px;color:#f65b69;-webkit-text-stroke:3px #f65b69;letter-spacing:5.2px;">色を変更すればその色の<br>グラデーションが追加される</div>
<svg style="left:0;top:0" width="36" height="779"><path d="M11 39.5 L22.5 50.5 L16 50.5 L11 55.5 Z" fill="none" stroke="#cfcfcf" stroke-width="1.4" stroke-linejoin="miter"/><path d="M10.5 64 L23 76 L16.5 76 L10.5 81.5 Z" fill="#cfcfcf"/><path d="M29.5 79.5 V83.5 H25.5 Z" fill="#cfcfcf"/><g transform="translate(15.5,97.5) rotate(45) scale(1.2) translate(-8,-6.5)"><rect x="4.8" y="-3.2" width="6.4" height="4.4" fill="#cfcfcf"/><path d="M3.2 2.2 H12.8 L12.3 8 L8 16 L3.7 8 Z" fill="#cfcfcf"/><circle cx="8" cy="8" r="1.3" fill="#535353"/><path d="M8 9 V15.5" stroke="#535353" stroke-width="1"/></g><path d="M29.5 104 V108 H25.5 Z" fill="#cfcfcf"/><g transform="translate(17,123) rotate(45) scale(1.2) translate(-8,-6.5)"><rect x="4.8" y="-3.2" width="6.4" height="4.4" fill="#cfcfcf"/><path d="M3.2 2.2 H12.8 L12.3 8 L8 16 L3.7 8 Z" fill="#cfcfcf"/><circle cx="8" cy="8" r="1.3" fill="#535353"/><path d="M8 9 V15.5" stroke="#535353" stroke-width="1"/></g><path d="M6.5 115.5 Q10 116.5 8.5 121.5 Q6 127.5 8 129.5 Q9.5 131 11 130" fill="none" stroke="#cfcfcf" stroke-width="1.3"/><ellipse cx="16" cy="147.3" rx="9.6" ry="6.8" fill="#6b6b6b" stroke="#cfcfcf" stroke-width="1.2"/><path d="M29.5 154.5 V158.5 H25.5 Z" fill="#cfcfcf"/><g transform="rotate(-45 15.5 172.5)"><rect x="10" y="169.5" width="13" height="6" fill="#cfcfcf"/><path d="M10 169.5 L4 172.5 L10 175.5 Z" fill="#cfcfcf"/><rect x="19.5" y="169.5" width="1" height="6" fill="#535353"/><path d="M5.5 171.7 L4 172.5 L5.5 173.3Z" fill="#535353"/></g><path d="M29.5 179.5 V183.5 H25.5 Z" fill="#cfcfcf"/><path d="M8 190.5 H23 V194 H21.8 L21.3 192.2 H17 V203.8 H19.2 V205.5 H11.8 V203.8 H14 V192.2 H9.7 L9.2 194 H8 Z" fill="#cfcfcf"/><path d="M29.5 204.5 V208.5 H25.5 Z" fill="#cfcfcf"/><path d="M10 219 A7 7 0 1 1 13 228.5" fill="none" stroke="#cfcfcf" stroke-width="1.6"/><path d="M8 214.5 L8.5 221 L14.5 219.5Z" fill="#cfcfcf"/><path d="M13 228.5 A7 7 0 0 1 9 223" fill="none" stroke="#cfcfcf" stroke-width="1" stroke-dasharray="1 1.5"/><path d="M29.5 229.5 V233.5 H25.5 Z" fill="#cfcfcf"/><circle cx="21" cy="243.5" r="3" fill="none" stroke="#cfcfcf" stroke-width="1.4"/><circle cx="21" cy="253" r="3" fill="none" stroke="#cfcfcf" stroke-width="1.4"/><path d="M7.5 241 L18.5 251.5 M7.5 255.5 L18.5 245" stroke="#cfcfcf" stroke-width="1.6"/><path d="M29.5 254.5 V258.5 H25.5 Z" fill="#cfcfcf"/><ellipse cx="13" cy="272" rx="7" ry="5.5" fill="none" stroke="#cfcfcf" stroke-width="1.1"/><ellipse cx="18" cy="270.5" rx="5" ry="4.5" fill="none" stroke="#cfcfcf" stroke-width="1"/><path d="M8 272 H16" stroke="#cfcfcf" stroke-width="2" stroke-dasharray="1 1"/><path d="M18 270 L26 277.5 L21.5 277.5 L18.5 281 Z" fill="#cfcfcf"/><rect x="1" y="287.5" width="29.5" height="22.5" fill="#333"/><defs><linearGradient id="tg" x1="0" x2="1"><stop offset="0" stop-color="#3a3a3a"/><stop offset="1" stop-color="#d8d8d8"/></linearGradient></defs><rect x="7.6" y="291.8" width="16.5" height="14" fill="url(#tg)" stroke="#d8d8d8" stroke-width="1.2"/><path d="M30 305.5 V309.5 H26 Z" fill="#cfcfcf"/><path d="M7.2 327.6 L12.4 332.6 M19 315.6 L24 320.8" stroke="#cfcfcf" stroke-width="1.2" fill="none"/><path d="M11.5 328.5 L19.8 320.5" stroke="#cfcfcf" stroke-width="2.2" fill="none"/><path d="M9.8 330.2 L11 324.8 L15.2 329Z M21.5 318.8 L20.3 324.2 L16.1 320Z" fill="#cfcfcf"/><path d="M11.8 323 L14.8 320.5" stroke="#cfcfcf" stroke-width="1.6"/><g transform="rotate(45 16 349.5)"><rect x="13" y="339" width="6" height="6" rx="2" fill="#cfcfcf"/><rect x="11.5" y="344.5" width="9" height="2.5" fill="#cfcfcf"/><path d="M13.5 347 H18.5 V357 L16 360 L13.5 357 Z" fill="none" stroke="#cfcfcf" stroke-width="1.3"/></g><path d="M8 370.5 Q8.5 366 12 366.5 Q15.5 367.5 14 371.5 Q13 374 16 376 Q20 377 22.5 373.5 Q23.5 371.5 22.5 368.5 Q26.5 371 25.5 376 Q23.5 381.5 16 381 Q10.5 380.5 10.5 376.5 Q11 373.5 12 371.5 Q11.5 369.5 10 370 Q9 371 8 370.5Z" fill="#cfcfcf"/><path d="M7.5 381.5 L18.5 368.5" stroke="#535353" stroke-width="2.2"/><path d="M7.5 381.5 L18.5 368.5" stroke="#cfcfcf" stroke-width="0.9"/><circle cx="13" cy="375.5" r="2" fill="#535353" stroke="#cfcfcf" stroke-width="1"/><circle cx="7" cy="382" r="1.6" fill="#cfcfcf"/><circle cx="18.5" cy="368.3" r="1.6" fill="#535353" stroke="#cfcfcf" stroke-width="0.9"/><rect x="6" y="391.5" width="8" height="8" fill="#cfcfcf"/><circle cx="16" cy="398" r="4.5" fill="#8a8a8a" stroke="#6a6a6a" stroke-width="0.8"/><circle cx="20.5" cy="402" r="4" fill="#535353" stroke="#cfcfcf" stroke-width="1.3"/><path d="M5 417.5 H9 M9.5 414 V419" stroke="#cfcfcf" stroke-width="1.2"/><path d="M10 419.5 H19 L23 423.5 V431 H10 Z" fill="#707070" stroke="#cfcfcf" stroke-width="1.3"/><path d="M6 442 L18 453 M6 456 L13 449" stroke="#cfcfcf" stroke-width="1.1"/><path d="M26 441 Q24 447 19 451 Q16 453 15 456 Q12 454 14 450 Q18 446 26 441Z" fill="#cfcfcf"/><circle cx="14" cy="472.5" r="6" fill="none" stroke="#cfcfcf" stroke-width="1.5"/><path d="M18.5 477 L24 483" stroke="#cfcfcf" stroke-width="2.2"/><path d="M30.5 481 V485 H26.5 Z" fill="#cfcfcf"/><rect x="1.2" y="496.5" width="7" height="7" fill="#fff" stroke="#111" stroke-width="1"/><rect x="5" y="500" width="7" height="7" fill="#111" stroke="#fff" stroke-width="1"/><rect x="7" y="502" width="3" height="3" fill="#fff"/><path d="M23 498 Q30 498 30 505" fill="none" stroke="#cfcfcf" stroke-width="1.4"/><path d="M21.5 498 L24.5 495.5 V500.5Z M30 507 L27.5 504 H32.5Z" fill="#cfcfcf"/></svg>
<div style="left:11px;top:524px;width:20px;height:20px;background:#fff;border:1px solid #222;"><div style="left:4px;top:4px;width:10px;height:10px;background:#2a2a2a;"></div></div>
<svg style="left:11px;top:524px" width="20" height="20"><line x1="1" y1="19" x2="19" y2="1" stroke="#e0201a" stroke-width="2"/></svg>
<div style="left:1px;top:514px;width:20px;height:20px;border:1px solid #dcdcdc;background:linear-gradient(90deg,#c07ab5,#fff 55%,#f0a080);"></div>
<div style="left:2px;top:552px;width:8px;height:9px;background:#fff;"></div>
<div style="left:12px;top:552px;width:8px;height:9px;background:linear-gradient(90deg,#b070a8,#fff 50%,#e08050);"></div>
<div style="left:21px;top:552px;width:9px;height:9px;background:#fff;"></div>
<svg style="left:21px;top:552px" width="9" height="9"><line x1="0" y1="9" x2="9" y2="0" stroke="#e0201a" stroke-width="1.6"/></svg>
<svg style="left:5px;top:569px" width="22" height="17"><rect x="1" y="5.5" width="12" height="10" fill="#5a5a5a" stroke="#cfcfcf" stroke-width="1.1"/><rect x="8" y="1" width="13" height="10" fill="#777" stroke="#cfcfcf" stroke-width="1.1"/><rect x="8" y="1" width="13" height="2.5" fill="#cfcfcf"/><rect x="1" y="5.5" width="7" height="2.5" fill="#cfcfcf"/></svg>
<svg style="left:7px;top:608px" width="18" height="6"><circle cx="3" cy="3" r="1.8" fill="#cfcfcf"/><circle cx="9" cy="3" r="1.8" fill="#cfcfcf"/><circle cx="15" cy="3" r="1.8" fill="#cfcfcf"/></svg>
<svg style="left:636px;top:37px" width="11" height="7"><path d="M1.5 5.5 L5.5 1.5 L9.5 5.5" fill="none" stroke="#bdbdbd" stroke-width="1.2"/></svg>
<svg style="left:636px;top:770px" width="11" height="7"><path d="M1.5 1.5 L5.5 5.5 L9.5 1.5" fill="none" stroke="#bdbdbd" stroke-width="1.2"/></svg>
</body></html>
